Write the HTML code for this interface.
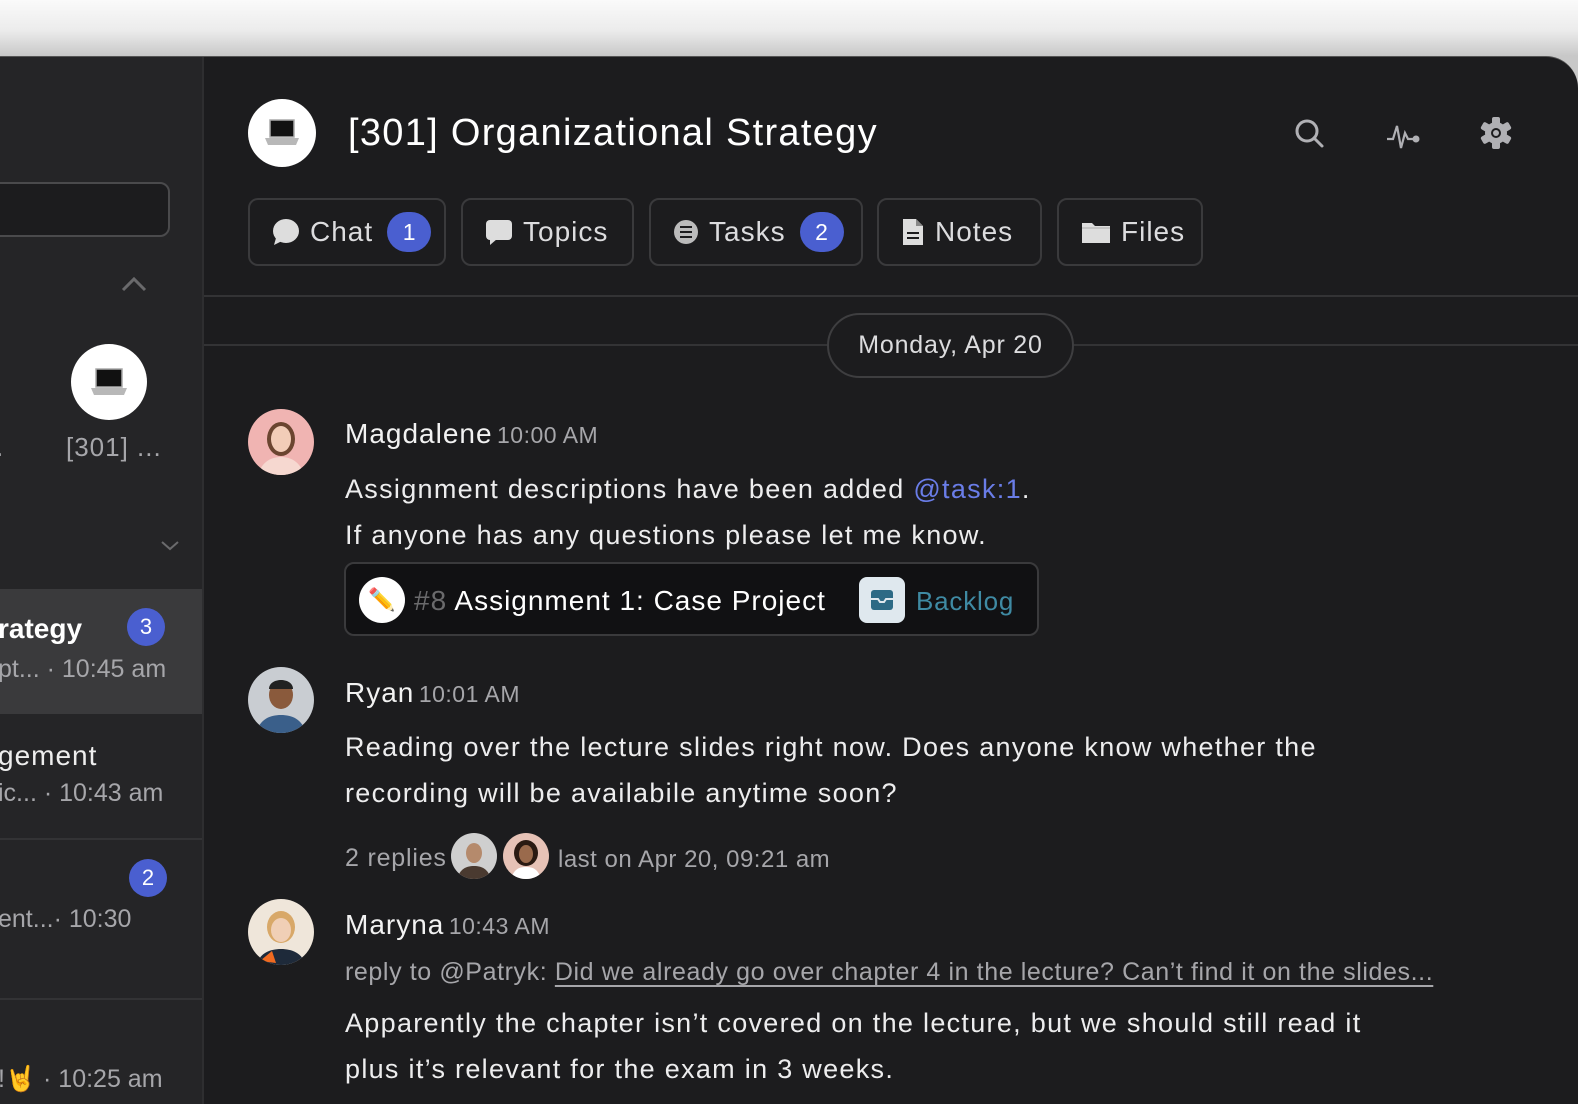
<!DOCTYPE html>
<html><head><meta charset="utf-8"><style>
*{margin:0;padding:0;box-sizing:border-box}
body{width:1578px;height:1104px;overflow:hidden;background:linear-gradient(#fafafa 0,#ececec 30px,#c8c8c8 56px,#c8c8c8 100%);font-family:"Liberation Sans","Noto Sans CJK JP",sans-serif;position:relative}
.win{position:absolute;left:0;top:56px;width:1578px;height:1048px;background:#1c1c1e;border-top-right-radius:32px;overflow:hidden;border-top:1px solid #555}
.side{position:absolute;left:0;top:0;width:204px;height:100%;background:#252527;border-right:2px solid #2e2e30}
.a{position:absolute;white-space:nowrap}
.circ{border-radius:50%;background:#fff;display:flex;align-items:center;justify-content:center}
.tab{position:absolute;top:141px;height:68px;border:2px solid #3a3a3c;border-radius:10px;color:#dcdcde;font-size:28px;letter-spacing:1px;display:flex;align-items:center;padding-left:22px;gap:10px}
.badge{width:44px;height:40px;border-radius:20px;background:#4a5fd0;color:#fff;font-size:23px;letter-spacing:0;display:flex;align-items:center;justify-content:center;margin-left:4px}
.name{color:#f2f2f2;font-size:28px;letter-spacing:1px}
.time{color:#a6a6aa;font-size:23px;letter-spacing:.5px}
.msg{color:#ededee;font-size:27px;line-height:46px;letter-spacing:1.3px}
.sb{color:#a6a6aa;font-size:25px}
.nb{position:absolute;width:38px;height:38px;border-radius:50%;background:#4a5fd0;color:#fff;font-size:22px;display:flex;align-items:center;justify-content:center}
</style></head><body>
<div class="win">
 <div class="side">
  <div class="a" style="left:-10px;top:125px;width:180px;height:55px;border:2px solid #4a4a4c;border-radius:10px;background:#1c1c1e"></div>
  <svg class="a" style="left:120px;top:218px" width="28" height="18"><path d="M3 15 L14 4 L25 15" fill="none" stroke="#6a6a6c" stroke-width="3"/></svg>
  <div class="a circ" style="left:71px;top:287px;width:76px;height:76px"><svg width="40" height="32"><rect x="7" y="3" width="26" height="18" fill="#111" stroke="#aaa" stroke-width="1.5"/><path d="M2 22h36l-3 7H5z" fill="#b8b8b8"/></svg></div>
  <div class="a sb" style="left:66px;top:375px;font-size:26px;letter-spacing:1px">[301] ...</div>
  <div class="a sb" style="left:-4px;top:375px;font-size:26px">.</div>
  <svg class="a" style="left:160px;top:482px" width="20" height="14"><path d="M2 3 L10 10 L18 3" fill="none" stroke="#6a6a6c" stroke-width="2"/></svg>
  <div class="a" style="left:0;top:532px;width:202px;height:125px;background:#3a3a3c"></div>
  <div class="a" style="left:-2px;top:556px;color:#fff;font-size:28px;font-weight:bold">rategy</div>
  <div class="nb" style="left:127px;top:551px">3</div>
  <div class="a sb" style="left:-2px;top:598px">pt... · 10:45 am</div>
  <div class="a" style="left:-2px;top:683px;color:#eee;font-size:28px;letter-spacing:1px">gement</div>
  <div class="a sb" style="left:-2px;top:722px">ic... · 10:43 am</div>
  <div class="a" style="left:0;top:781px;width:202px;height:2px;background:#333335"></div>
  <div class="nb" style="left:129px;top:802px">2</div>
  <div class="a sb" style="left:-2px;top:848px">ent...· 10:30</div>
  <div class="a" style="left:0;top:941px;width:202px;height:2px;background:#333335"></div>
  <div class="a sb" style="left:-2px;top:1008px">!🤘 · 10:25 am</div>
 </div>
 <div class="a circ" style="left:248px;top:42px;width:68px;height:68px"><svg width="38" height="32"><rect x="7" y="3" width="24" height="17" fill="#111" stroke="#aaa" stroke-width="1.5"/><path d="M2 21h34l-3 7H5z" fill="#b8b8b8"/></svg></div>
 <div class="a" style="left:348px;top:55px;color:#fff;font-size:38px;letter-spacing:1.3px">[301] Organizational Strategy</div>
 <svg class="a" style="left:1292px;top:60px" width="34" height="34"><circle cx="15" cy="14" r="10" fill="none" stroke="#b0b0b4" stroke-width="3"/><path d="M22 21l8 8" stroke="#b0b0b4" stroke-width="3" stroke-linecap="round"/></svg>
 <svg class="a" style="left:1386px;top:58px" width="36" height="36"><path d="M1 24h6l4-13 4 22 4-15 3 6h6" fill="none" stroke="#b0b0b4" stroke-width="2.2"/><circle cx="30" cy="24" r="3.5" fill="#b0b0b4"/></svg>
 <svg class="a" style="left:1478px;top:58px" width="36" height="36" viewBox="0 0 36 36"><g fill="#b0b0b4" transform="translate(18 18)"><circle r="11"/><rect x="-4" y="-16" width="8" height="32" rx="2"/><rect x="-4" y="-16" width="8" height="32" rx="2" transform="rotate(60)"/><rect x="-4" y="-16" width="8" height="32" rx="2" transform="rotate(120)"/></g><circle cx="18" cy="18" r="5" fill="#1c1c1e"/><circle cx="18" cy="18" r="3" fill="#b0b0b4"/></svg>
 <div class="tab" style="left:248px;width:198px"><svg width="28" height="28"><ellipse cx="14" cy="13" rx="13" ry="12" fill="#ddd"/><path d="M4 20l-2 7 8-4z" fill="#ddd"/></svg>Chat<div class="badge">1</div></div>
 <div class="tab" style="left:461px;width:173px"><svg width="28" height="28"><rect x="1" y="2" width="26" height="20" rx="4" fill="#ddd"/><path d="M5 20v7l7-6z" fill="#ddd"/></svg>Topics</div>
 <div class="tab" style="left:649px;width:214px"><svg width="26" height="26"><circle cx="13" cy="13" r="12" fill="#bbb"/><path d="M7 8h12M7 13h12M7 18h12" stroke="#1c1c1e" stroke-width="2"/></svg>Tasks<div class="badge">2</div></div>
 <div class="tab" style="left:877px;width:165px"><svg width="24" height="30"><path d="M2 2h13l7 7v19H2z" fill="#ddd"/><path d="M15 2v7h7" fill="#888"/><path d="M6 16h12M6 21h12" stroke="#1c1c1e" stroke-width="2"/></svg>Notes</div>
 <div class="tab" style="left:1057px;width:146px"><svg width="30" height="26"><path d="M1 4h10l3 3h15v17H1z" fill="#ddd"/><path d="M1 9h28" stroke="#aaa" stroke-width="1"/></svg>Files</div>
 <div class="a" style="left:204px;top:238px;width:1375px;height:2px;background:#333335"></div>
 <div class="a" style="left:204px;top:287px;width:1375px;height:2px;background:#333335"></div>
 <div class="a" style="left:827px;top:256px;width:247px;height:65px;border:2px solid #3e3e40;border-radius:33px;background:#1c1c1e;color:#dcdcde;font-size:25px;letter-spacing:.8px;display:flex;align-items:center;justify-content:center">Monday, Apr 20</div>

 <div class="a circ" style="left:248px;top:352px;width:66px;height:66px;background:#f0b4b2;overflow:hidden"><svg width="66" height="66"><ellipse cx="33" cy="30" rx="14" ry="17" fill="#6b4530"/><ellipse cx="33" cy="30" rx="10" ry="13" fill="#f2cdb8"/><path d="M10 66c4-14 14-18 23-18s19 4 23 18z" fill="#f6d8d0"/></svg></div>
 <div class="a" style="left:345px;top:361px"><span class="name">Magdalene</span> <span class="time">10:00 AM</span></div>
 <div class="a msg" style="left:345px;top:409px">Assignment descriptions have been added <span style="color:#6a7de8">@task:1</span>.<br>If anyone has any questions please let me know.</div>
 <div class="a" style="left:344px;top:505px;width:695px;height:74px;border:2px solid #3a3a3c;border-radius:10px;background:#111113"></div>
 <div class="a circ" style="left:359px;top:520px;width:46px;height:46px;font-size:22px">✏️</div>
 <div class="a" style="left:414px;top:528px;font-size:28px;color:#fff;letter-spacing:1px"><span style="color:#6a6a6c">#8</span> Assignment 1: Case Project</div>
 <div class="a" style="left:859px;top:520px;width:46px;height:46px;border-radius:8px;background:#dfe8ee;display:flex;align-items:center;justify-content:center"><svg width="26" height="24"><rect x="2" y="2" width="22" height="20" rx="3" fill="#2d6a85"/><path d="M2 11h7l2 3h4l2-3h7" stroke="#dfe8ee" stroke-width="2" fill="none"/></svg></div>
 <div class="a" style="left:916px;top:529px;font-size:26px;color:#3f8aa3;letter-spacing:.8px">Backlog</div>

 <div class="a circ" style="left:248px;top:610px;width:66px;height:66px;background:#c9cdd2;overflow:hidden"><svg width="66" height="66"><ellipse cx="33" cy="28" rx="12" ry="14" fill="#8a5a3c"/><path d="M21 22c0-12 24-12 24 0" fill="#222"/><path d="M8 66c4-14 14-18 25-18s21 4 25 18z" fill="#3a5f8a"/></svg></div>
 <div class="a" style="left:345px;top:620px"><span class="name">Ryan</span> <span class="time">10:01 AM</span></div>
 <div class="a msg" style="left:345px;top:667px">Reading over the lecture slides right now. Does anyone know whether the<br>recording will be availabile anytime soon?</div>
 <div class="a sb" style="left:345px;top:787px;letter-spacing:.8px">2 replies</div>
 <div class="a circ" style="left:451px;top:776px;width:46px;height:46px;background:#cfcfcf;overflow:hidden"><svg width="46" height="46"><ellipse cx="23" cy="20" rx="8" ry="10" fill="#b58a6c"/><path d="M6 46c3-10 9-13 17-13s14 3 17 13z" fill="#4a3a30"/></svg></div>
 <div class="a circ" style="left:503px;top:776px;width:46px;height:46px;background:#e6c2b6;overflow:hidden"><svg width="46" height="46"><ellipse cx="23" cy="20" rx="12" ry="13" fill="#2a1a12"/><ellipse cx="23" cy="21" rx="7" ry="9" fill="#9a6a4c"/><path d="M8 46c3-10 8-12 15-12s12 2 15 12z" fill="#fff"/></svg></div>
 <div class="a sb" style="left:558px;top:789px;font-size:24px;letter-spacing:.5px">last on Apr 20, 09:21 am</div>

 <div class="a circ" style="left:248px;top:842px;width:66px;height:66px;background:#efe6da;overflow:hidden"><svg width="66" height="66"><ellipse cx="33" cy="28" rx="14" ry="16" fill="#d8a868"/><ellipse cx="33" cy="31" rx="10" ry="12" fill="#f0cfb6"/><path d="M8 66c4-12 14-16 25-16s21 4 25 16z" fill="#1e2a3a"/><path d="M12 62l12-10 4 12z" fill="#f06a20"/></svg></div>
 <div class="a" style="left:345px;top:852px"><span class="name">Maryna</span> <span class="time">10:43 AM</span></div>
 <div class="a sb" style="left:345px;top:901px;font-size:25px;letter-spacing:.6px">reply to @Patryk: <span style="text-decoration:underline;text-underline-offset:5px">Did we already go over chapter 4 in the lecture? Can’t find it on the slides...</span></div>
 <div class="a msg" style="left:345px;top:943px">Apparently the chapter isn’t covered on the lecture, but we should still read it<br>plus it’s relevant for the exam in 3 weeks.</div>
</div>
</body></html>
